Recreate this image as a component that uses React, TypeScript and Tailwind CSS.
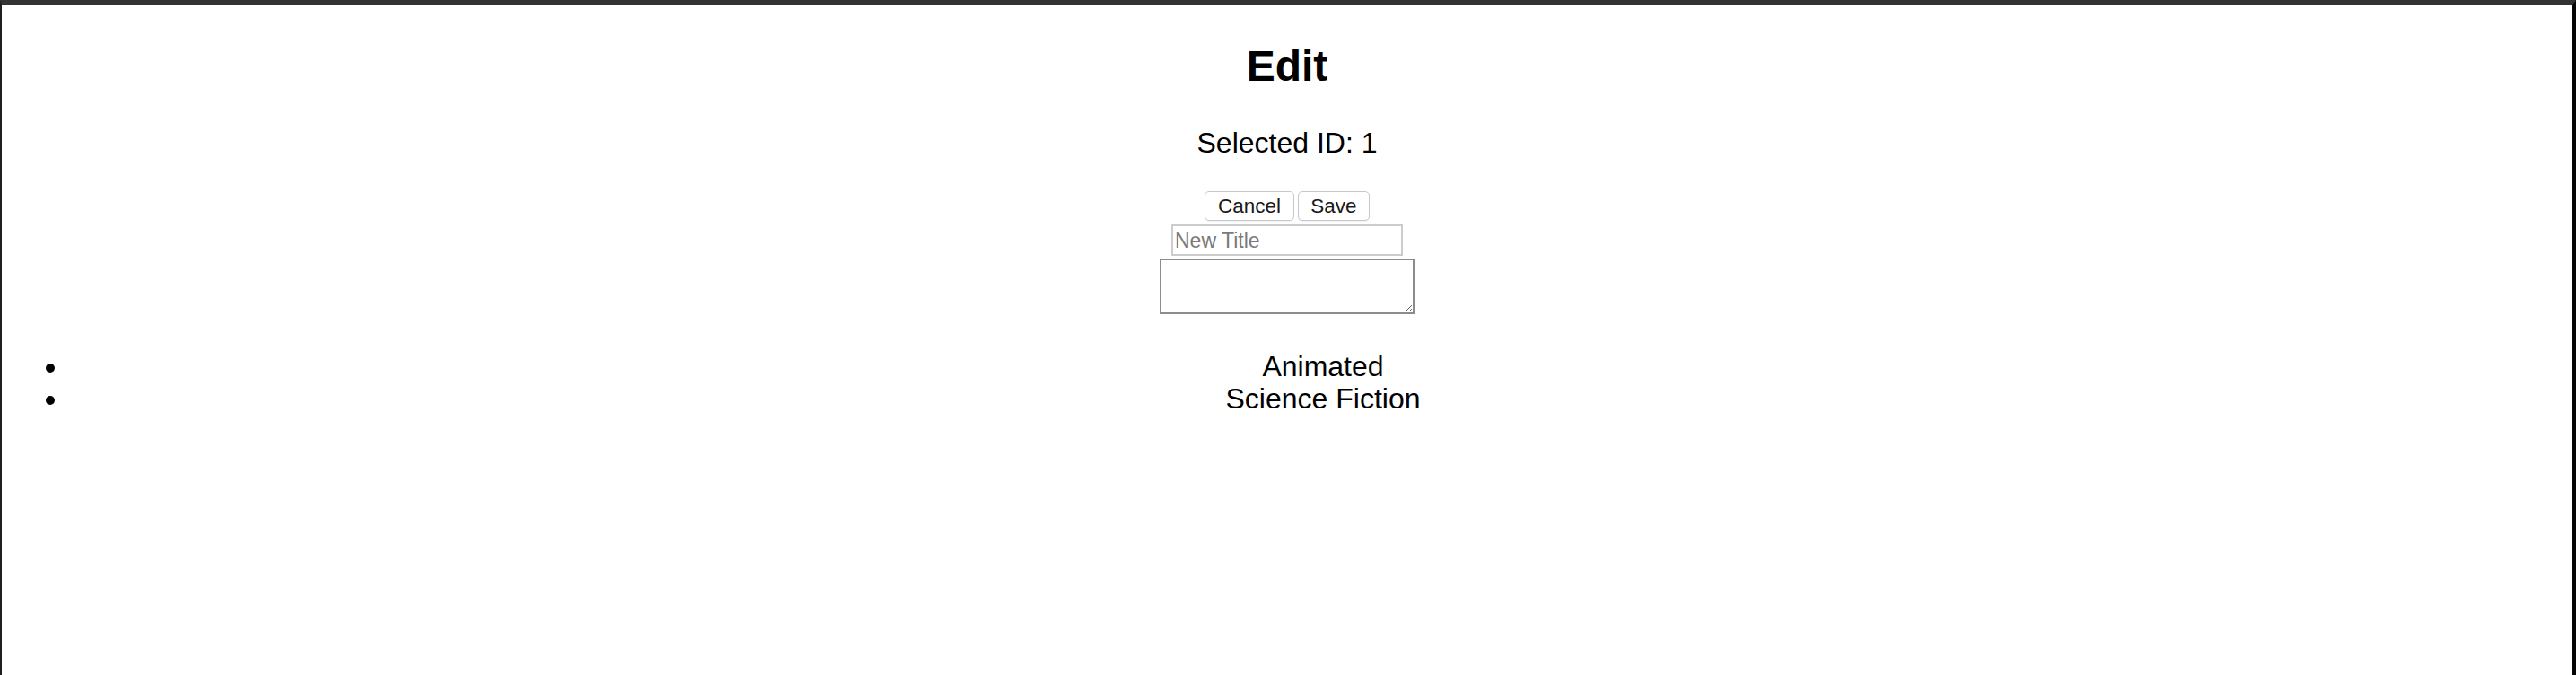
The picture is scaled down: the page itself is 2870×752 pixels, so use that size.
import React from "react";

export default function App() {
  return (
    <div
      className="h-[752px] w-[2870px] overflow-hidden border-t-[6px] border-l-[2px] border-r-[4px] border-t-[#333335] border-l-[#1e1e1e] border-r-[#050505] bg-white text-black"
      style={{ fontFamily: '"Liberation Sans", Arial, Helvetica, sans-serif' }}
    >
      <div className="flex flex-col items-center">
        <h2 className="mt-[40px] text-[48px] font-bold leading-[55px]">Edit</h2>
        <p className="mt-[40px] text-[32px] leading-[37px]">Selected ID: 1</p>
        <div className="mt-[35px] flex gap-[4px]">
          <button className="h-[33px] w-[100px] rounded-[5px] border border-[#c8c8c8] bg-white pt-[1px] text-[22.5px] leading-none text-[#1a1a1a] shadow-[0_1px_1px_rgba(0,0,0,0.06)]">
            Cancel
          </button>
          <button className="h-[33px] w-[80px] rounded-[5px] border border-[#c8c8c8] bg-white pt-[1px] text-[22.5px] leading-none text-[#1a1a1a] shadow-[0_1px_1px_rgba(0,0,0,0.06)]">
            Save
          </button>
        </div>
        <input
          className="mt-[4px] h-[35px] w-[258px] border-2 border-[#cccccc] px-[2px] pt-[2px] text-[23px] outline-none placeholder:text-[#7a7a7a]"
          placeholder="New Title"
        />
        <textarea className="mt-[3px] h-[62px] w-[284px] border-2 border-[#8c8c8c] outline-none" />
      </div>
      <ul className="mt-[40px] list-disc pl-[80px] text-[32px] leading-[36px]">
        <li className="-ml-[5px] pl-[5px] text-center">Animated</li>
        <li className="-ml-[5px] pl-[5px] text-center">Science Fiction</li>
      </ul>
    </div>
  );
}
